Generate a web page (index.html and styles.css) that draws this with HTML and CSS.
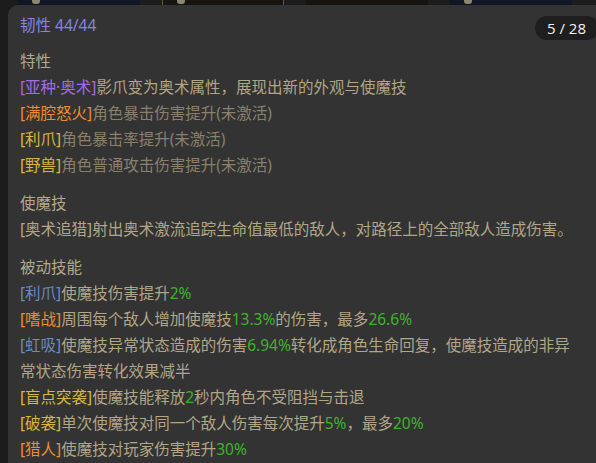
FILE: index.html
```html
<!DOCTYPE html>
<html lang="zh">
<head>
<meta charset="utf-8">
<title>Tooltip</title>
<link rel="stylesheet" href="styles.css">
</head>
<body>
<div class="backdrop">
  <div class="strip">
    <div class="card navy"><span class="fig"></span></div>
    <div class="card gold"><span class="fig"></span></div>
    <div class="card olive"></div>
    <div class="card navy"><span class="fig"></span></div>
  </div>
  <div class="panel">
    <div class="badge">5 / 28</div>
    <div class="title">韧性 44/44</div>

    <section class="sec first">
      <div class="head">特性</div>
      <div class="line"><span class="t-purple">[亚种<span class="dot">·</span>奥术]</span>影爪变为奥术属性，展现出新的外观与使魔技</div>
      <div class="line dim"><span class="t-orange">[满腔怒火]</span>角色暴击伤害提升(未激活)</div>
      <div class="line dim"><span class="t-yellow">[利爪]</span>角色暴击率提升(未激活)</div>
      <div class="line dim"><span class="t-yellow">[野兽]</span>角色普通攻击伤害提升(未激活)</div>
    </section>

    <section class="sec">
      <div class="head">使魔技</div>
      <div class="line">[奥术追猎]射出奥术激流追踪生命值最低的敌人，对路径上的全部敌人造成伤害。</div>
    </section>

    <section class="sec">
      <div class="head">被动技能</div>
      <div class="line"><span class="t-blue">[利爪]</span>使魔技伤害提升<span class="g">2%</span></div>
      <div class="line"><span class="t-orange">[嗜战]</span>周围每个敌人增加使魔技<span class="g">13.3%</span>的伤害，最多<span class="g">26.6%</span></div>
      <div class="line"><span class="t-blue">[虹吸]</span>使魔技异常状态造成的伤害<span class="g">6.94%</span>转化成角色生命回复，使魔技造成的非异常状态伤害转化效果减半</div>
      <div class="line"><span class="t-yellow">[盲点突袭]</span>使魔技能释放<span class="g">2</span>秒内角色不受阻挡与击退</div>
      <div class="line"><span class="t-yellow">[破袭]</span>单次使魔技对同一个敌人伤害每次提升<span class="g">5%</span>，最多<span class="g">20%</span></div>
      <div class="line"><span class="t-orange">[猎人]</span>使魔技对玩家伤害提升<span class="g">30%</span></div>
    </section>
  </div>
</div>
</body>
</html>
```
FILE: styles.css
```css
* { box-sizing: border-box; }
html, body {
  margin: 0;
  padding: 0;
  background: #1c1c1c;
  overflow: hidden;
  height: 463px;
}
.backdrop {
  width: 596px;
  height: 463px;
  overflow: hidden;
  font-family: "Noto Sans", "Noto Sans CJK SC", sans-serif;
}
.strip {
  height: 5px;
  display: flex;
  gap: 22px;
  padding-left: 18px;
}
.card {
  width: 122px;
  height: 5px;
  position: relative;
}
.navy { background: #0f1624; }
.gold { background: #17150d; border-left: 1px solid #6b5a2a; border-right: 1px solid #6b5a2a; }
.olive { background: #16140c; }
.fig {
  position: absolute;
  left: 14px;
  top: 0;
  width: 8px;
  height: 4px;
  background: #8d8670;
  border-radius: 0 0 3px 3px;
}
.panel {
  position: relative;
  margin-left: 8px;
  height: 458px;
  background: #333333;
  border-radius: 10px 0 0 0;
  padding: 7px 14px 0 12px;
  font-size: 15.5px;
  line-height: 26px;
  color: #b2a686;
}
.badge {
  position: absolute;
  right: -3px;
  top: 11px;
  height: 24px;
  line-height: 24px;
  padding: 0 13px 0 12px;
  border-radius: 12px;
  background: #1e1e1e;
  color: #f2f2f2;
  font-size: 15px;
  font-family: "Open Sans", "Noto Sans", sans-serif;
}
.title {
  color: #8585e4;
}
.dot { font-family: "Noto Sans", sans-serif; }
.sec { margin-top: 12px; }
.sec.first { margin-top: 10px; }
.head { color: #b4a98c; }
.dim { color: #8a806b; }
.t-purple { color: #a46ae8; }
.t-orange { color: #f08c2e; }
.t-yellow { color: #d7b83c; }
.t-blue { color: #6b8ac2; }
.g { color: #3db52a; }
```
